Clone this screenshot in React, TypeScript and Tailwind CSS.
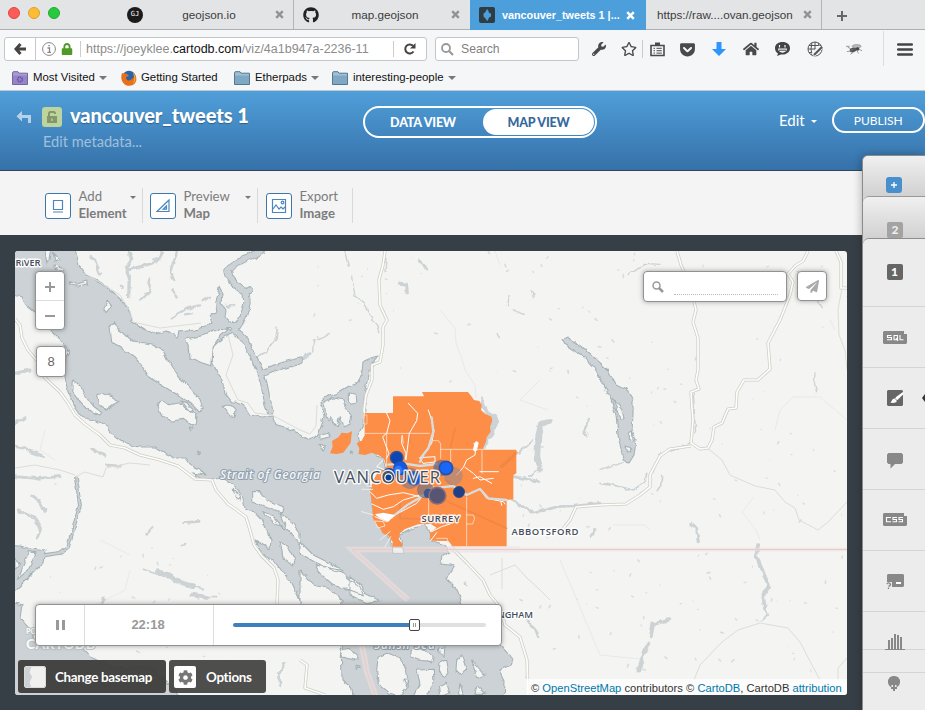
import React from "react";
import { FaGithub, FaWrench, FaRegStar, FaGetPocket, FaHome, FaLock, FaCog, FaPaperPlane } from "react-icons/fa";

const third = (x: number, y: number) => `translate(${x} ${y}) scale(.33333)`;

const INLETS = [
  "M262 251L246 258 233 265 228 270 230 278 238 287 246 293 247 303 243 318 235 330",
  "M235 331L246 341 254 358 260 372 264 384 267 399 270 411",
  "M261 374L275 368 288 364 300 361",
  "M249 290L244 293",
];

const ISLANDS: { x: number; y: number; d: string }[] = [
  {
    x: 0,
    y: 236,
    d: "M343 258L330 270 335 318 365 335 405 365 430 395 445 420 480 445 530 475 575 505 595 525 610 520 600 490 570 455 530 415 505 375 490 345 460 328 400 318 370 290 355 280ZM470 505L485 495 515 505 540 500 560 520 590 530 590 560 575 567 550 550 515 555 485 540ZM545 495L560 500 578 520 570 527ZM290 480L310 470 335 480 345 492 358 498 340 505 318 522 295 505ZM220 430L240 450 265 490 280 510 305 530 300 537 270 525 245 505 218 470ZM207 137L230 145 260 135 262 143 235 150 210 147ZM322 192L335 210 318 230 311 218ZM135 40L155 40 150 70 140 82ZM160 50L180 72 165 78ZM165 90L195 100 190 108 165 100ZM555 310L600 300 640 285 685 278 660 300 640 330 635 390 605 380 570 365 568 340ZM668 512L690 505 705 520 703 545 690 540ZM198 340L210 345 205 362ZM590 645L602 650 598 656ZM565 573L576 577 570 582ZM680 275L695 275 692 284Z",
  },
  {
    x: 300,
    y: 236,
    d: "M72 500L100 485 130 492 135 515 155 540 150 565 130 572 118 545 112 570 100 560 92 545 84 555 80 545ZM148 470L165 475 168 500 155 505 148 490ZM60 598L85 592 90 602 60 610ZM57 625L75 630 70 645ZM155 645L158 650 154 652Z",
  },
  {
    x: 0,
    y: 470,
    d: "M755 65L780 65 800 90 850 110 845 125 790 110 755 95ZM785 125L810 132 855 180 825 160ZM840 130L870 150 900 190 900 225 860 175ZM840 215L860 225 885 270 880 290 850 265ZM700 55L715 70 722 90 705 80Z",
  },
  {
    x: 300,
    y: 470,
    d: "M0 215L40 255 90 280 130 300 110 305 50 280 0 250ZM45 285L120 300 140 320 180 350 190 375 150 360 100 345 60 310ZM0 300L40 345 85 355 130 390 120 410 0 410ZM150 318L185 345 195 370 240 392 200 398 150 375ZM235 560L260 550 300 560 320 600 325 650 300 678 270 670 235 640 230 600ZM330 540L345 530 380 545 400 560 395 575 355 570 330 560ZM350 600L400 598 402 640 380 678 340 678 360 640ZM420 580L440 570 447 610 430 625 418 600ZM470 570L485 555 500 600 480 612 468 600ZM515 570L555 615 530 625ZM415 650L440 640 450 670 420 678ZM480 640L490 675 475 675ZM530 650L555 670 525 670ZM120 540L150 535 175 565 160 570 130 560ZM310 630L322 630 320 650ZM170 588L178 592 172 598ZM415 535L435 530 432 560 418 550Z",
  },
];

const LAKES: { x: number; y: number; d: string; w: number }[] = [
  { x: 0, y: 236, w: 10, d: "M388 50L395 70 380 90 388 120 386 185M390 100L430 90 470 78 487 50" },
  { x: 0, y: 236, w: 7, d: "M530 50L515 95 510 110 520 135M450 125L448 165 420 192M460 70L478 72M520 160L530 185M515 250L530 235 560 218 600 208M555 235L575 232M365 150L368 155M608 195L630 182M272 60L285 75 300 115M680 212L700 210" },
  { x: 0, y: 236, w: 9, d: "M45 412L90 402M45 560L75 545M48 628L85 645 130 660M275 640L300 650 315 660M320 688L358 690" },
  { x: 0, y: 236, w: 5, d: "M832 275L828 310 800 345 770 362" },
  { x: 0, y: 236, w: 14, d: "M785 405L830 393 870 388 900 375M790 405L792 440 800 500 812 528M745 320L765 365 785 405" },
  { x: 300, y: 236, w: 9, d: "M0 378L30 350M355 72L380 97M298 142L320 145 322 170" },
  { x: 300, y: 236, w: 4, d: "M38 345L40 315 70 305 85 295M135 50L145 90M155 120L165 180 195 205 240 290M628 180L622 208M640 222L670 235M695 165L700 185M258 70L255 110M592 295L598 305" },
  { x: 300, y: 236, w: 17, d: "M748 558L722 565 715 600 712 660 720 698" },
  { x: 300, y: 236, w: 6, d: "M695 615L655 650M870 545L850 590 860 600M720 695L690 720" },
  { x: 600, y: 236, w: 4, d: "M85 115L135 85 180 88M645 410L643 440 650 470M655 195L667 215M280 470L287 590M150 720L180 655 275 620M0 700L70 680" },
  { x: 0, y: 470, w: 8, d: "M98 78L120 95 138 125M58 122L105 145 122 175 110 205M45 20L110 25 180 20M440 190L457 170M545 225L558 222M550 158L598 154M855 580L838 610 840 645M305 400L312 383" },
  { x: 0, y: 470, w: 14, d: "M475 305L510 315 535 335 580 348M575 375L620 382" },
  { x: 0, y: 470, w: 5, d: "M430 298L610 358M600 380L650 380" },
  { x: 300, y: 470, w: 8, d: "M635 90L700 130 770 110 820 108 900 100M640 20L720 35M870 200L888 178M680 455L705 475 715 500M495 340L495 345" },
  { x: 600, y: 470, w: 9, d: "M272 160L290 178 295 215" },
  { x: 600, y: 470, w: 11, d: "M475 225L468 255 488 300 505 350 490 380 495 420M205 450L160 462 152 500M145 520L128 560 115 602" },
  { x: 600, y: 470, w: 5, d: "M495 420L505 435 485 452M20 40L100 60 135 35 140 10M185 20L182 45 172 62M0 40L30 45" },
];

const MAJOR_ROADS = [
  "M15 319L20 325 22 338 28 350 38 362 45 378 60 392 68 403 75 415 85 424 100 435 110 445 125 448 140 455 160 460 178 466 190 475 195 479 212 480 216 490 228 504 238 511 246 517 250 530 254 545 262 556 274 568 278 580 277 604",
  "M385 251L383 265 379 280 380 305 387 320 383 327 383 345 380 362 372 365 372 380 366 395 364 410 366 420",
  "M677 251L681 265 690 285 696 310 693 322 698 338 698 370 696 380 699 389 691 392 692 408 693 420 691 443 700 449 708 448 712 440 714 427 722 423 728 409 736 408 737 392 744 380 758 380 770 369 768 343 780 320 790 295 793 282 788 274 795 266 803 261 808 251",
  "M691 446L670 449 660 456 650 475 650 487 640 495 626 504 600 505 576 507 570 520 562 530",
  "M450 546L467 563 483 580 490 595 500 607 505 625 520 637 527 660 528 695",
  "M836 251L841 262 841 288 847 288",
  "M300 660L307 665 305 688 325 695",
];

const MINOR_ROADS = [
  "M88 275L120 295 130 311 133 322 160 328 201 323",
  "M842 288L838 310 839 335 845 350 847 370",
  "M706 447L722 460 730 475 755 486 775 490 785 502 795 508 799 520 818 530 828 522 847 502",
  "M694 680L700 665 722 642 738 630 760 623 788 628 800 642 812 665 820 680M847 658L838 668 838 680",
  "M300 430L310 434 316 426 317 405",
  "M75 477L85 472 103 477 106 468 130 463 150 465",
  "M228 335L233 355 226 375 238 400 248 403 255 413 272 415 285 422 300 430",
  "M502 558L502 589M490 575L515 565 527 578 540 590 550 600",
  "M15 468L35 465 60 470 75 475",
];

const FAINT_ROADS = [
  "M495 251L500 265M440 310L455 328 456 343 463 362 465 370 475 385 476 398",
  "M775 430L780 410 793 397 820 397 847 420",
  "M613 525L645 525 650 530M754 497L742 512 756 530 760 540",
  "M540 380L520 400 548 410M560 560L600 655 640 659M830 320L835 330",
  "M45 430L40 450 55 460M130 570L125 590 90 608M100 540L130 555",
];

function seeded(count: number) {
  const out: { x: number; y: number; r: number; a: number }[] = [];
  let s = 4711;
  const next = () => {
    s = (s * 16807) % 2147483647;
    return s / 2147483647;
  };
  while (out.length < count) {
    const x = 15 + next() * 832;
    const y = 251 + next() * 444;
    const east = x > 395 && !(y > 385 && x < 520);
    const northeast = x > 275 && y < 345;
    const southwest = y > 440 + x * 0.6 && x < 240;
    const r = 0.5 + next() * 1.1;
    const a = next() * 180;
    if (east || northeast || southwest) out.push({ x, y, r, a });
  }
  return out;
}
const PONDS = seeded(210);

function Label({ x, y, size, width, weight = 600, children }: { x: number; y: number; size: number; width: number; weight?: number; children: string }) {
  return (
    <text x={x} y={y} fontSize={size} textLength={width} fill="#454e5b" stroke="#fff" strokeWidth={2.8} strokeOpacity={0.9} paintOrder="stroke" strokeLinejoin="round" fontFamily="'Open Sans','Noto Sans',sans-serif" fontWeight={weight}>
      {children}
    </text>
  );
}

function BaseMap() {
  return (
    <svg viewBox="15 251 832 444" className="block h-full w-full" role="img" aria-label="Map of Vancouver">
      <defs>
        <filter id="coast" x="0" y="0" width="1" height="1" colorInterpolationFilters="sRGB">
          <feTurbulence type="fractalNoise" baseFrequency=".13" numOctaves="2" seed="8" />
          <feDisplacementMap in="SourceGraphic" scale="5" xChannelSelector="R" yChannelSelector="G" />
        </filter>
      </defs>
      <rect x="15" y="251" width="832" height="444" fill="#f4f4f2" />
      <g fill="none" stroke="#e9e9e7" strokeWidth="1">
        {FAINT_ROADS.map((d) => <path key={d} d={d} />)}
      </g>
      <g fill="#d9dddd">
        {PONDS.map((p, i) => (
          <ellipse key={i} cx={p.x} cy={p.y} rx={p.r * 1.5} ry={p.r * 0.6} transform={`rotate(${p.a} ${p.x} ${p.y})`} />
        ))}
      </g>
      <g filter="url(#coast)" strokeLinejoin="round" strokeLinecap="round">
        <rect x="5" y="241" width="852" height="464" fill="#f4f4f2" fillOpacity="0" />
        <g fill="none" stroke="#cdd3d5">
          {LAKES.map((l) => <path key={l.d} d={l.d} strokeWidth={l.w} transform={third(l.x, l.y)} />)}
        </g>
        <g fill="none" stroke="#a5b2b5">
          {INLETS.map((d) => <path key={d} d={d} strokeWidth="7.400" />)}
          <path d="M76 478L80 505 73 530 68 547 60 553 45 555 35 560" strokeWidth="3.8" />
        </g>
        <g fill="#ccd2d5" stroke="#a5b2b5" strokeWidth="1.1">
          <path d="M5 240H73L79 265 87 275 100 283 113 292 125 304 130 313 131 321 137 324 146 330 158 334 166 331 173 333 177 338 179 332 195 330 208 325 212 322 210 316 218 312 216 302 219 287 222 293 221 303 226 310 225 317 229 322 237 321 240 328 235 331 228 334 220 340 213 347 212 360 217 373 222 380 225 393 232 402 236 402 243 404 250 415 262 417 273 416 276 425 285 427 300 434 309 440 314 438 319 433 322 425 324 415 320 403 325 398 338 393 348 387 358 383 362 373 363 362 372 358 378 356 372 363 369 375 366 385 364 398 365 410 364 423 358 435 361 447 372 452 383 458 385 467 392 472 378 469 369 476 370 488 372 500 375 515 380 525 384 533 392 538 391 546 394 552 402 552 401 540 399 535 410 529 425 525 431 533 430 540 445 545 450 552 442 556 441 563 449 564 455 565 450 573 446 578 455 587 460 597 462 605 500 645 512 658 510 665 500 670 505 680 504 705H354L352 688 342 680 341 640 300 600 292 583 285 575 275 562 262 555 256 541 270 549 271 540 262 520 255 512 245 508 243 498 238 490 232 483 222 478 210 480 200 478 192 473 206 475 200 469 190 465 185 458 175 458 165 453 155 447 140 447 125 444 115 437 105 425 95 420 83 418 75 407 68 392 65 378 66 358 69 350 60 340 50 330 35 312 26 305 22 297 5 294Z" />
          <path d="M5 600L22 605 20 618 28 626 35 640 80 645 90 657 115 668 150 667 170 685 188 705H5Z" />
          <path d="M5 545L20 546 32 549 45 551 43 563 27 579 5 600Z" />
          <path d="M563 339L567 337 585 349 598 361 608 370 616 384 626 389 633 400 633 415 632 430 636 440 634 455 629 463 623 460 621 450 618 435 616 415 611 400 604 385 594 368 584 357 566 345Z" />
        </g>
        <path d="M480 395L485 402 488 411 495 415 499 421 494 434 487 445 480 452 477 450 483 437 485 425 490 418 481 408Z" fill="#ccd2d5" />
        <g fill="none" stroke="#ccd2d5">
          {INLETS.map((d) => <path key={d} d={d} strokeWidth="5.400" />)}
          <path d="M76 478L80 505 73 530 68 547 60 553 45 555 35 560" strokeWidth="1.8" />
        </g>
        <g fill="#f4f4f2" stroke="#a5b2b5" strokeWidth="3.300">
          {ISLANDS.map((i) => <path key={i.d} d={i.d} transform={third(i.x, i.y)} />)}
          <path transform={third(0, 470)} d="M85 245L108 248 85 300 55 325ZM45 265L60 280 45 300Z" />
          <path transform={third(600, 236)} d="M40 490L65 520 72 545 60 550 50 520ZM88 590L97 585 100 615 88 610ZM78 630L92 635 92 648 82 645Z" />
        </g>
      </g>
      <g fill="none" stroke="#dcdcd8" strokeWidth="1">
        {MINOR_ROADS.map((d) => <path key={d} d={d} />)}
      </g>
      <g fill="none" strokeLinejoin="round">
        {MAJOR_ROADS.map((d) => (
          <g key={d}>
            <path d={d} stroke="#cecec6" strokeWidth="3.200" />
            <path d={d} stroke="#fdfdfb" strokeWidth="1.700" />
          </g>
        ))}
      </g>
      <g fill="none">
        <path d="M520 549.500H352L408 600M361 640L367 672 377 700" stroke="#ecdfdf" strokeOpacity=".6" strokeWidth="6" />
        <path d="M847 549.500H520" stroke="#ecdfdf" strokeOpacity=".6" strokeWidth="3.500" />
        <path d="M847 549.500H352L408 600M361 640L367 672 377 700" stroke="#eccaca" strokeWidth="1" />
      </g>

      <g transform={third(320, 380)} strokeLinejoin="round" strokeLinecap="round">
        <path
          fill="#fc8e48"
          d="M134 99H219V49H312L306 36H444L454 49 462 60 478 63 485 75 483 90 493 100 514 110 517 122 510 140 512 155 500 172 498 185 487 209H589V280L580 285V358L560 360V499H398L385 483 332 482 329 458 350 443 333 432 295 433 255 447 240 460 236 478 246 490 246 500H216L218 485 205 468 188 460 178 440 165 430 158 412 156 372 150 335 160 300 172 280 200 262 192 236 175 225 155 218 135 225 116 222 118 205 110 190 125 182 134 166ZM30 220L38 200 36 183 55 172 65 158 82 160 96 154 92 188 70 218 50 222Z"
        />
        <g fill="none" stroke="#e97f3e" strokeOpacity=".55" strokeWidth="5">
          <path d="M372 360L560 445M240 370L240 415 300 417M270 152L270 190M405 145L392 200" />
          <path d="M375 300L430 335 440 345" />
        </g>
        <path d="M545 260L590 218" stroke="#e4803f" strokeOpacity=".5" strokeWidth="9" />
        <g fill="none" stroke="#fde0c9" strokeWidth="2.500">
          <path d="M134 160H328M200 160V258M326 330V410M440 352V498M363 208H487M392 210V245M486 210V280M440 405H460L464 415 458 432H440M340 182H356L362 192V235M247 167L250 190M350 475H382V486" />
        </g>
        <g fill="none" stroke="#fff" strokeWidth="3">
          <path d="M200 100L210 122 200 160 188 170 195 190 207 220 200 235M265 70L293 100 290 122 268 160 258 240M246 167L245 190 258 220 256 238M325 90L335 120 342 152 335 190 312 220 302 238M469 188L465 225 440 240 430 262 410 285M462 190L470 210M435 262L460 280 480 300 520 295M460 295L480 290 515 310M480 275H535M478 325L500 355 550 365 555 372M543 366L545 376" />
          <path d="M150 335L170 355 205 345 250 338 300 350 340 320M156 372L190 388 220 380 250 360 300 345M165 410L200 425 225 405 290 370 310 345M335 455L365 440 390 432M332 482L350 458M300 233L345 230 345 246 310 250ZM190 240L170 260 195 270" />
          <path d="M126 328H158M125 395L160 405M180 480L210 455M195 500L212 470M140 318L155 320M130 270L150 285" stroke="#eceeee" />
        </g>
        <g fill="none" stroke="#d7dcdd" strokeWidth="7">
          <path d="M335 112L340 155 325 205 305 230M310 225L300 245M205 254L250 250 300 258 350 252" />
          <path d="M172 405L215 412 262 375 302 352 335 325 400 318 440 345 480 327 505 355 560 360" />
        </g>
        <path d="M165 403L190 398 225 405 205 425 180 415Z" fill="#fff" />
        <path d="M470 190L465 208" stroke="#fff" strokeWidth="12" />
        <path d="M165 423L190 425 195 438 175 443Z" fill="#fc8e48" stroke="#fff" strokeWidth="2" />
        <path d="M130 105H141V132H132Z" fill="none" stroke="#fde0c9" strokeWidth="2" />
        <path d="M218 502H248L252 520H220Z" fill="#eeeeec" stroke="#b5bfc1" strokeWidth="2" />
        <g>
          <circle cx="400" cy="288" r="28" fill="#94878d" fillOpacity=".55" />
          <circle cx="364" cy="264" r="24" fill="#59678d" fillOpacity=".7" />
          <circle cx="270" cy="295" r="32" fill="#83748a" fillOpacity=".6" />
          <circle cx="316" cy="330" r="25" fill="#77707f" fillOpacity=".7" />
          <circle cx="230" cy="233" r="19" fill="#0c46b5" stroke="#3c5686" strokeWidth="4" />
          <circle cx="207" cy="285" r="21" fill="#0a49bb" />
          <circle cx="241" cy="264" r="20" fill="#1559df" stroke="#254e9b" strokeWidth="3" />
          <circle cx="235" cy="270" r="13" fill="#2b78ff" />
          <circle cx="282" cy="295" r="20" fill="#1459dc" stroke="#3a60a8" strokeWidth="4" />
          <circle cx="325" cy="340" r="14" fill="#244c91" fillOpacity=".8" />
          <circle cx="378" cy="264" r="20" fill="#1768f8" stroke="#2b50a5" strokeWidth="5" />
          <circle cx="352" cy="347" r="25" fill="#575474" stroke="#8d6c7a" strokeWidth="5" />
          <circle cx="417" cy="336" r="17" fill="#1f4085" stroke="#354c7d" strokeWidth="2" />
        </g>
      </g>

      <text x="220" y="478.500" fontSize="12" fontStyle="italic" fontWeight="600" textLength="100" fill="#f3f5f7" stroke="#90a0ae" strokeWidth="2" paintOrder="stroke" fontFamily="'Open Sans','Noto Sans',sans-serif">Strait of Georgia</text>
      <text x="374" y="649" fontSize="12" fontStyle="italic" fontWeight="600" textLength="61" fill="#f3f5f7" stroke="#90a0ae" strokeWidth="2" paintOrder="stroke" fontFamily="'Open Sans','Noto Sans',sans-serif">Salish Sea</text>
      <Label x={334} y={483} size={16.6} width={106} weight={500}>VANCOUVER</Label>
      <circle cx="388.500" cy="477.500" r="5.200" fill="#fff" />
      <circle cx="388.500" cy="477.500" r="5" fill="none" stroke="#454e5b" strokeWidth="1.500" />
      <circle cx="388.500" cy="477.500" r="3" fill="#0b3e98" />
      <Label x={421.500} y={521.500} size={9.5} width={38}>SURREY</Label>
      <Label x={511.500} y={535} size={9.5} width={67}>ABBOTSFORD</Label>
      <Label x={474} y={618} size={9.5} width={59}>BELLINGHAM</Label>
      <Label x={15.5} y={266} size={9.5} width={25}>RIVER</Label>
      <g fontFamily="Lato,sans-serif" fontWeight="900" fill="#f9fafa" stroke="#c0c6c9" strokeWidth="2" paintOrder="stroke">
        <text x="26" y="634" fontSize="7">POWERED BY</text>
        <text x="26" y="649" fontSize="14" textLength="69">CARTODB</text>
      </g>
    </svg>
  );
}

function Close({ active }: { active?: boolean }) {
  return (
    <svg viewBox="0 0 9 9" className={`h-[9px] w-[9px] shrink-0 ${active ? "text-white" : "text-[#929395]"}`}>
      <path d="M1.200 1.200L7.800 7.800M7.800 1.200L1.200 7.800" stroke="currentColor" strokeWidth="2.400" />
    </svg>
  );
}

function TabBar() {
  return (
    <div className="flex h-[30px] border-b border-[#adafb1] bg-[#e3e4e6] text-[11.7px] text-[#3c3c3c]">
      <div className="flex w-[294px] items-center border-r border-[#b3b4b6] pl-2">
        <div className="flex gap-2 self-start pt-[7px]">
          <span className="h-3 w-3 rounded-full border border-[#e2463f] bg-[#fc5b57]" />
          <span className="h-3 w-3 rounded-full border border-[#e0a024] bg-[#fdbc35]" />
          <span className="h-3 w-3 rounded-full border border-[#1dad2c] bg-[#28c940]" />
        </div>
        <span className="ml-[67px] flex h-4 w-4 items-center justify-center rounded-full bg-[#1b1b1b] font-['DejaVu_Sans_Mono',monospace] text-[7px] text-white">GJ</span>
        <span className="flex-1 pt-px pl-[12px] text-center">geojson.io</span>
        <span className="mr-[9px] ml-3"><Close /></span>
      </div>
      <div className="flex w-[176px] items-center pl-[9px]">
        <FaGithub size={16} color="#222" />
        <span className="flex-1 pt-px pl-[12px] text-center">map.geojson</span>
        <span className="mr-[10px] ml-3"><Close /></span>
      </div>
      <div className="flex h-[30px] w-[176px] items-center bg-[#4c9fdb] pl-[9px] text-white">
        <span className="flex h-4 w-4 items-center justify-center rounded-xs bg-[#2e3c43]">
          <svg viewBox="0 0 16 16" className="h-4 w-4"><path d="M8 2L9.500 4 10 6 12 6.500V9.500L10 10.500 9 13 8 14 7 12 6 11 4.500 9.500V6.500L6 5.500 7 4Z" fill="#4c9fdb" /></svg>
        </span>
        <span className="ml-[7px] w-[117px] pt-px text-[10.8px] font-bold whitespace-nowrap">vancouver_tweets 1 |...</span>
        <span className="ml-[7px]"><Close active /></span>
      </div>
      <div className="flex w-[176px] items-center border-r border-[#b3b4b6] pl-[11px]">
        <span className="w-[135px] pt-px text-[11.7px] whitespace-nowrap">https://raw....ovan.geojson</span>
        <span className="ml-[11px]"><Close /></span>
      </div>
      <svg viewBox="0 0 10 10" className="mt-[11px] ml-[15px] h-[10px] w-[10px]"><path d="M5 0V10M0 5H10" stroke="#666" strokeWidth="2" /></svg>
    </div>
  );
}

function NavBar() {
  return (
    <div className="flex h-[36px] items-center bg-[#f5f6f8] pt-[2px] pl-1 text-[#4a4a4a]">
      <div className="flex h-6 w-[423px] items-center rounded-[3px] border border-[#c5c6c8] bg-white">
        <span className="flex h-full w-[31px] items-center justify-center border-r border-[#c9c9cb]">
          <svg viewBox="0 0 12 12" className="h-3 w-3"><path d="M6.500 1L2 6 6.500 11M2.500 6H12" fill="none" stroke="#444" strokeWidth="3" /></svg>
        </span>
        <svg viewBox="0 0 14 14" className="ml-[6px] h-[14px] w-[14px] shrink-0"><circle cx="7" cy="7" r="6.400" fill="none" stroke="#888" /><path d="M5.500 6H7.500V10M5.300 10.300H9M6.300 3.700H7.800" stroke="#888" fill="none" strokeWidth="1.300" /></svg>
        <FaLock size={12} color="#4f9a27" className="ml-[5px] shrink-0" />
        <span className="ml-[7px] h-4 w-px bg-[#ccc]" />
        <span className="ml-[5px] w-[307px] overflow-hidden pt-px text-[12.5px] whitespace-nowrap text-[#8c8c8c]">https://joeyklee.<span className="text-[#111]">cartodb.com</span>/viz/4a1b947a-2236-11</span>
        <span className="h-4 w-px bg-[#ccc]" />
        <svg viewBox="0 0 12 12" className="mx-[10px] h-3 w-3 shrink-0"><path d="M9.500 8.500A4.500 4.500 0 1 1 9 2.800" fill="none" stroke="#444" strokeWidth="2" /><path d="M11.500 0V5.500H6Z" fill="#444" /></svg>
      </div>
      <div className="ml-2 flex h-6 w-[144px] items-center rounded-[3px] border border-[#c5c6c8] bg-white pl-[5px]">
        <svg viewBox="0 0 13 13" className="h-[13px] w-[13px]"><circle cx="5" cy="5" r="4" fill="none" stroke="#999" strokeWidth="1.800" /><path d="M8 8L12 12" stroke="#999" strokeWidth="2.200" /></svg>
        <span className="ml-[7px] pt-px text-[12.2px] text-[#818181]">Search</span>
      </div>
      <FaWrench size={14} className="ml-[13px]" />
      <FaRegStar size={16} className="ml-[15px]" />
      <span className="ml-[5px] h-[18px] w-px bg-[#ccc]" />
      <svg viewBox="0 0 15 15" className="ml-[7px] h-[15px] w-[15px]"><path d="M1 3.500H14V13.500H1Z" fill="none" stroke="#4a4a4a" strokeWidth="1.600" /><path d="M5 .5H10V3.500H5Z" fill="#4a4a4a" /><path d="M3.500 6.300H5M6.500 6.300H11.800M3.500 8.700H5M6.500 8.700H11.800M3.500 11.100H5M6.500 11.100H11.800" stroke="#4a4a4a" strokeWidth="1" /></svg>
      <FaGetPocket size={17} className="ml-[14px]" />
      <svg viewBox="0 0 14 14" className="ml-[16px] h-[14px] w-[14px]"><path d="M4.500 0H9.500V7H14L7 14 0 7H4.500Z" fill="#2d95fb" /></svg>
      <FaHome size={16} className="ml-[17px]" />
      <svg viewBox="0 0 15 14" className="ml-[16px] h-[14px] w-[15px]"><path d="M7.500 0C3 0 0 2.500 0 6.200 0 8.400 1 10.300 3 11.500L2 14 6 12.500C11 13 15 10.400 15 6.200 15 2.500 12 0 7.500 0Z" fill="#444" /><path d="M3 6.500H12C12 12 3 12 3 6.500Z" fill="#f5f6f8" /><path d="M4.500 3V5.500M10 3V5.500" stroke="#f5f6f8" strokeWidth="1.200" /><path d="M4 8.200H11" stroke="#444" /></svg>
      <svg viewBox="0 0 16 16" className="ml-[17px] h-4 w-4"><circle cx="8" cy="8" r="7" fill="none" stroke="#555" /><path d="M1 8H12M2 4.500H14M2 11.500H8M8 1V12M5 1.500Q3 8 5 14M11 2Q13 5 12 8" fill="none" stroke="#555" /><path d="M6 14L14 6" stroke="#f5f6f8" strokeWidth="5" /><path d="M7 14L15 6" stroke="#555" strokeWidth="2.200" /></svg>
      <svg viewBox="0 0 18 14" className="ml-[23px] h-[14px] w-[16px]"><ellipse cx="8" cy="8" rx="4" ry="2.500" fill="#555" transform="rotate(-20 8 8)" /><ellipse cx="12" cy="4" rx="5" ry="2" fill="#bbb" stroke="#777" strokeWidth=".6" /><circle cx="13" cy="7" r="2" fill="#444" /><path d="M8 8L2 5M7 9L1 10M9 10L5 13M12 8L14 12M14 7L18 9M4 4L0 4" stroke="#777" strokeWidth=".8" /></svg>
      <span className="ml-[21px] h-[36px] w-px bg-[#dcdde0]" />
      <svg viewBox="0 0 16 13" className="ml-[13px] h-[13px] w-[16px]"><path d="M1.200 1.500H14.800M1.200 6.500H14.800M1.200 11.500H14.800" stroke="#444" strokeWidth="2.600" strokeLinecap="round" /></svg>
    </div>
  );
}

function Folder({ smart }: { smart?: boolean }) {
  return (
    <svg viewBox="0 0 16 14" className="h-[14px] w-4 shrink-0">
      <path d="M.5 2L1.200 .7H6L7 2.200H15.500V13.500H.5Z" fill={smart ? "#a99bd4" : "#9fbfd5"} stroke={smart ? "#7466a3" : "#55788f"} />
      <path d="M1 4.500H15V13H1Z" fill={smart ? "#9585c6" : "#7fa8c4"} />
      {smart && <circle cx="8" cy="8.500" r="2.300" fill="none" stroke="#6956a6" strokeWidth="1.800" strokeDasharray="1.300 .6" />}
    </svg>
  );
}
const Caret = () => <span className="ml-[5px] h-0 w-0 border-x-4 border-t-4 border-x-transparent border-t-[#777]" />;

function Bookmarks() {
  return (
    <div className="flex h-[25px] items-center border-b border-[#c3c8cc] bg-[#f5f6f8] pl-3 text-[11.4px] whitespace-nowrap text-[#111]">
      <Folder smart /><span className="ml-[5px] w-[61px]">Most Visited</span><Caret />
      <svg viewBox="0 0 16 16" className="ml-[14px] h-4 w-4 shrink-0"><circle cx="8" cy="7.500" r="6.800" fill="#2c64a8" /><path d="M1 3C3 4 4 3 6 4L8 6 5 7C5 11 9 12 13 7L12 3C16 5 17 12 12 15 5 18-1 12 .5 5Z" fill="#e8701b" /><path d="M12 3C15 6 15 11 12 13.500 14 10 14 7 12 3Z" fill="#fbc932" /></svg>
      <span className="ml-[4px] w-[77px]">Getting Started</span>
      <span className="ml-4 flex"><Folder /></span><span className="ml-[5px] w-[51px]">Etherpads</span><Caret />
      <span className="ml-[13px] flex"><Folder /></span><span className="ml-[5px] w-[90px]">interesting-people</span><Caret />
    </div>
  );
}

function Header() {
  return (
    <header className="flex h-20 border-b border-[#30475b] bg-linear-to-b from-[#509fda] to-[#3671a9] font-[Lato,sans-serif] text-white">
      <svg viewBox="0 0 16 14" className="mt-[19px] ml-[16px] h-[14px] w-4 opacity-60"><path d="M6 1V5H15V13H12V8H6V11.500L.5 6.200Z" fill="#fff" /></svg>
      <div className="ml-[10px] w-[321px]">
        <div className="mt-[12px] flex h-[26px] items-center">
          <span className="mt-[2px] flex h-5 w-5 items-center justify-center rounded-[3px] bg-[#bdd59d]">
            <svg viewBox="0 0 10 12" className="h-3 w-[10px]"><path d="M0 5H10V12H0ZM1 5V2.500Q1 0 3.500 0H6.500Q9 0 9 2.500V3H7V2H3V5Z" fill="#84966b" /><path d="M4.300 7.500H5.700V10H4.300Z" fill="#bdd59d" /></svg>
          </span>
          <h1 className="ml-2 pb-[2px] text-[20px] font-black tracking-[-0.07px] [text-shadow:0_1px_1px_rgba(0,0,0,.3)]">vancouver_tweets 1</h1>
        </div>
        <p className="mt-px ml-px text-[14.6px] leading-6 text-white/50">Edit metadata...</p>
      </div>
      <div className="mt-[15px] flex h-8 w-[234px] items-center rounded-full border-2 border-white text-[12.5px] font-black tracking-[-0.2px]">
        <span className="w-[116px] pt-[2px] text-center">DATA VIEW</span>
        <span className="ml-[2px] flex h-[26px] w-[111px] items-center justify-center rounded-full bg-white pt-[2px] text-[#36699c]">MAP VIEW</span>
      </div>
      <span className="mt-[17px] ml-[182px] text-[15px] leading-6">Edit</span>
      <span className="mt-[29px] ml-[6px] h-0 w-0 border-x-3 border-t-3 border-x-transparent border-t-white" />
      <span className="mt-[16px] ml-[15px] flex h-[26px] w-[93px] shrink-0 items-center justify-center rounded-full border-2 border-white pt-[2px] text-[12px]">PUBLISH</span>
    </header>
  );
}

function Tool({ a, b, children }: { a: string; b: string; children: React.ReactNode }) {
  return (
    <>
      <span className="mt-[5px] flex h-[26px] w-[26px] shrink-0 items-center justify-center rounded-[3px] border border-[#3c77ac] bg-white">
        <svg viewBox="0 0 16 16" className="h-4 w-4" fill="none" stroke="#4b87bc" strokeWidth="1.200">{children}</svg>
      </span>
      <span className="ml-[7.5px] text-[13.2px] leading-[17px] text-[#7c7c7c]">{a}<br /><b className="font-bold">{b}</b></span>
    </>
  );
}
const ToolCaret = () => <span className="mt-[8px] h-0 w-0 border-x-3 border-t-3 border-x-transparent border-t-[#777]" />;

function Toolbar() {
  return (
    <div className="flex h-16 bg-[#f4f4f4] pt-[17px] font-[Lato,sans-serif]">
      <div className="flex h-[35px] w-[143px] border-r border-[#d9d9d9] pl-[45px]">
        <Tool a="Add" b="Element"><path d="M3.500 2.500H12.500V11.500H3.500ZM3 14H13" /></Tool>
        <span className="ml-auto flex pr-[6px]"><ToolCaret /></span>
      </div>
      <div className="flex h-[35px] w-[115px] border-r border-[#d9d9d9] pl-[7px]">
        <Tool a="Preview" b="Map"><path d="M14 2V13.500H2ZM11.500 8V11.200H8.200Z" /></Tool>
        <span className="ml-auto flex pr-[6px]"><ToolCaret /></span>
      </div>
      <div className="flex h-[35px] w-[95px] border-r border-[#d9d9d9] pl-[8px]">
        <Tool a="Export" b="Image"><path d="M1.500 1.500H14.500V14.500H1.500ZM2 11L5 7 8 11 10 9 12 11 14 9" /><circle cx="11.500" cy="4.500" r="1.300" /></Tool>
      </div>
    </div>
  );
}

const BOX = "absolute rounded-[4px] border border-[#929292] bg-white shadow-[0_0_5px_rgba(0,0,0,.35)]";

function MapPanel() {
  return (
    <main className="relative mt-4 ml-[15px] h-[444px] w-[832px] overflow-hidden rounded-[3px]">
      <BaseMap />
      <div className={`${BOX} top-5 left-5 flex h-[59px] w-[30px] flex-col text-[#999]`}>
        <span className="flex flex-1 items-center justify-center border-b border-[#ddd] pt-[2px]"><svg viewBox="0 0 10 10" className="h-[10px] w-[10px]"><path d="M5 0V10M0 5H10" stroke="currentColor" strokeWidth="2" /></svg></span>
        <span className="flex flex-1 items-center justify-center pt-[2px]"><span className="h-[2px] w-[10px] bg-[#999]" /></span>
      </div>
      <div className={`${BOX} top-[95px] left-[21px] flex h-[31px] w-[30px] items-center justify-center text-[13px] text-[#666]`}>8</div>
      <div className={`${BOX} top-5 left-[628px] flex h-[31px] w-[144px] items-center pl-2`}>
        <svg viewBox="0 0 12 12" className="h-3 w-3"><circle cx="4.500" cy="4.500" r="3.500" fill="none" stroke="#999" strokeWidth="1.500" /><path d="M7 7L11 11" stroke="#999" strokeWidth="2.500" /></svg>
        <span className="mt-[16px] ml-[10px] w-[104px] border-b border-dotted border-[#bbb]" />
      </div>
      <div className={`${BOX} top-5 left-[782px] flex h-[30px] w-[30px] items-center justify-center`}><FaPaperPlane size={13} color="#aaa" /></div>
      <div className={`${BOX} top-[353px] left-5 flex h-[42px] w-[467px] items-center`}>
        <span className="flex h-full w-[49px] items-center justify-center gap-[3px] border-r border-[#ddd]"><i className="h-[10px] w-[3px] bg-[#999]" /><i className="h-[10px] w-[3px] bg-[#999]" /></span>
        <span className="flex h-full w-[129px] items-center justify-center border-r border-[#ddd] pr-[2px] pb-px text-[13px] font-bold text-[#999]">22:18</span>
        <span className="ml-[19px] flex h-3 w-[253px] items-center">
          <i className="h-1 w-[176px] rounded-l bg-[#3e7fbd]" />
          <i className="flex h-[12px] w-[11px] items-center justify-center gap-[1px] rounded-xs border border-[#444] bg-white"><b className="h-1 w-px bg-[#999]" /><b className="h-1 w-px bg-[#999]" /></i>
          <i className="h-1 flex-1 rounded-r bg-[#e0e0e0]" />
        </span>
      </div>
      <div className="absolute top-[409px] left-[3px] flex gap-[3px] font-[Lato,sans-serif] text-[13.4px] font-bold tracking-[-0.3px] text-white">
        <span className="flex h-[33px] w-[148px] items-center rounded-[3px] bg-[#3c3c3b]/95 pt-px pl-[6px] whitespace-nowrap">
          <svg viewBox="0 0 22 22" className="mr-[9px] h-[22px] w-[22px] rounded-xs border border-white/80"><path d="M0 0H22V22H0Z" fill="#f0f0ee" /><path d="M0 0H7L5 6 8 11 5 17 7 22H0Z" fill="#ccd2d5" /></svg>
          Change basemap
        </span>
        <span className="flex h-[33px] w-[97px] items-center rounded-[3px] bg-[#454543]/95 pt-px pl-[5px]">
          <span className="mr-[10px] flex h-[22px] w-[22px] items-center justify-center rounded-xs bg-white">
            <FaCog size={15} color="#777" />
          </span>
          Options
        </span>
      </div>
      <div className="absolute right-0 bottom-0 h-4 w-[321px] bg-white/75 pl-[5px] text-[11.2px] leading-[19px] whitespace-nowrap text-[#333]">
        © <span className="text-[#0078a8]">OpenStreetMap</span> contributors © <span className="text-[#0078a8]">CartoDB</span>, CartoDB <span className="text-[#0078a8]">attribution</span>
      </div>
    </main>
  );
}

function LayerPanel() {
  const row = "flex shrink-0 items-center justify-center border-b border-[#d4d4d4] pl-px";
  return (
    <aside className="absolute top-[155px] left-[862px] flex h-[555px] w-[63px] flex-col overflow-hidden rounded-tl-[6px] border-t border-l border-[#8b8b8b] bg-[#d5d5d5] font-[Lato,sans-serif] shadow-[-1px_0_8px_rgba(0,0,0,.25)]">
      <div className="flex h-[40px] shrink-0 items-end justify-center bg-linear-to-b from-[#f0f0f0] to-[#d1d1d1] pb-[3px]">
        <span className="flex h-4 w-4 items-center justify-center rounded-[3px] bg-[#488fcd]"><svg viewBox="0 0 6 6" className="h-[6px] w-[6px]"><path d="M3 0V6M0 3H6" stroke="#fff" strokeWidth="1.300" /></svg></span>
      </div>
      <div className="flex h-[42px] shrink-0 items-end justify-center rounded-tl-[6px] border-t border-[#999] bg-linear-to-b from-[#f0f0f0] to-[#d1d1d1] pl-[2px]">
        <span className="flex h-4 w-4 items-center justify-center rounded-[2px] bg-[#a3a3a3] text-[12px] font-black text-[#eee]">2</span>
      </div>
      <div className="flex flex-1 flex-col rounded-tl-[6px] border-t border-[#8d8d8d] bg-[#ececec]">
        <div className={`${row} h-[68px] pb-px`}><span className="flex h-4 w-4 items-center justify-center rounded-[2px] bg-[#666] text-[12px] font-black text-white">1</span></div>
        <div className={`${row} h-[61px]`}>
          <svg viewBox="0 0 24 13" className="h-[13px] w-6"><path d="M1 0H21V3H24V12L23 13H1L0 12V1Z" fill="#888" /><path d="M8.500 4.500H4.500V6.500H8.500V8.700H4M11 4.500H14.500V8.700H11ZM13 7L15 10M17 4V8.700H20.500" fill="none" stroke="#fff" strokeWidth="1.100" /></svg>
        </div>
        <div className={`${row} relative h-[61px]`}>
          <svg viewBox="0 0 16 16" className="h-4 w-4">
            <path d="M1 0H15L16 1V15L15 16H1L0 15V1Z" fill="#666" />
            <path d="M16 2L9 7 8 9 10.500 10 16 4.500Z" fill="#fff" />
            <path d="M7.500 8.500L10 11C9 13 6 13.500 3 12.500 5 12 4.500 9 7.500 8.500Z" fill="#fff" />
          </svg>
          <span className="absolute right-0 h-0 w-0 border-y-4 border-r-[3px] border-y-transparent border-r-[#333]" />
        </div>
        <div className={`${row} h-[61px]`}><svg viewBox="0 0 16 16" className="mt-[3px] h-4 w-4"><path d="M1.500 0H14.500L16 1.500V9.500L14.500 11H8L3.500 15.500V11H1.500L0 9.500V1.500Z" fill="#888" /></svg></div>
        <div className={`${row} h-[61px] pb-px pl-[3px]`}>
          <svg viewBox="0 0 24 13" className="h-[13px] w-6"><path d="M1 0H21V3H24V12L23 13H1L0 12V1Z" fill="#888" /><path d="M8 4.500H3.500V8.700H8M14 4.500H10V6.500H13.500V8.700H9.500M20 4.500H16V6.500H19.500V8.700H15.500" fill="none" stroke="#fff" strokeWidth="1.100" /></svg>
        </div>
        <div className={`${row} h-[61px]`}>
          <svg viewBox="0 0 18 15" className="h-[15px] w-[18px]"><path d="M2 0H17L18 1V12L17 13H6V8H1V1Z" fill="#888" /><path d="M10 9H15" stroke="#fff" strokeWidth="2" /><path d="M.8 10Q2.500 8 4 9.500T2.500 12.300M2.500 13.500V15" fill="none" stroke="#888" strokeWidth="1.400" /></svg>
        </div>
        <div className="flex h-[38px] shrink-0 items-end justify-center border-b border-[#d4d4d4] pl-[2px]">
          <svg viewBox="0 0 20 17" className="-mb-px h-[17px] w-5"><path d="M4 7V16M7 5V16M10 1V16M13 2V16M16 4V16" stroke="#888" strokeWidth="2" /><path d="M0 16.500H20" stroke="#888" /></svg>
        </div>
        <div className="h-[23px] shrink-0 border-b border-[#d4d4d4]" />
        <div className="flex justify-center pt-[3px]"><svg viewBox="0 0 12 15" className="h-[15px] w-3"><path d="M3.500 11.500L1 9.500 0 7V4L2 1 5 0H7L10 1 12 4V7L11 9.500 8.500 11.500V9H3.500Z" fill="#888" /><path d="M6 8V15M3 12H9" stroke="#888" strokeWidth="2" /></svg></div>
      </div>
    </aside>
  );
}

export default function App() {
  return (
    <div className="relative flex h-[710px] w-[925px] flex-col overflow-hidden bg-[#373f46] font-['Liberation_Sans',Arial,sans-serif]">
      <TabBar />
      <NavBar />
      <Bookmarks />
      <Header />
      <Toolbar />
      <MapPanel />
      <LayerPanel />
    </div>
  );
}
